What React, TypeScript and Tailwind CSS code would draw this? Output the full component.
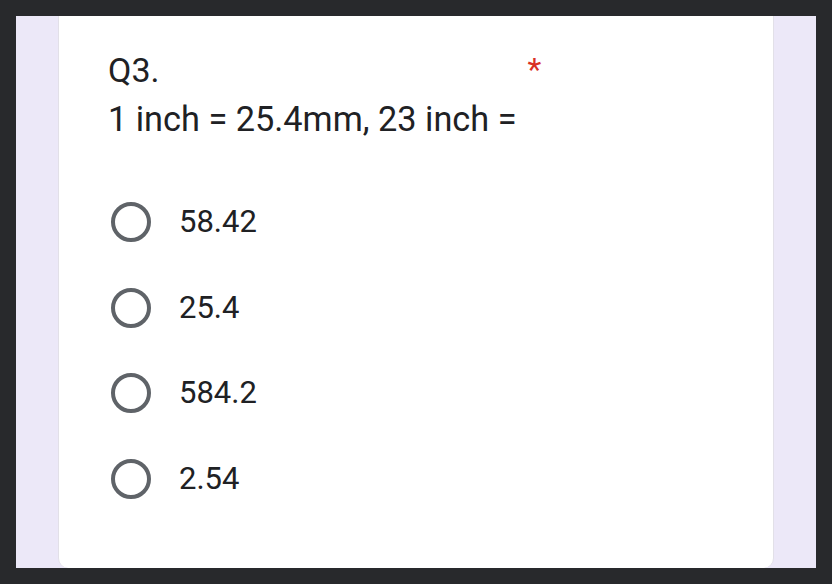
const options = ['58.42', '25.4', '584.2', '2.54'];

export default function App() {
  return (
    <div className="w-[832px] h-[584px] bg-[#28292c] pt-[16px] px-[16px] pb-[16px] font-['Roboto',sans-serif]">
      <div className="h-full bg-[#ece8f8] px-[42px]">
        <div className="h-full bg-white rounded-b-[10px] border-l border-r border-[#e2e0e8] pl-[49px] pr-6 pt-[34px]">
          <div className="flex">
            <div className="text-[#202124]">
              <div className="text-[34px] leading-[40px]">Q3.</div>
              <div className="text-[34.3px] leading-[40px] mt-[9px]">1 inch = 25.4mm, 23 inch =</div>
            </div>
            <span className="ml-[11px] mt-[2px] text-[#d93025] text-[32px] leading-[34px]">*</span>
          </div>
          <div className="mt-[63px] flex flex-col gap-[45.5px]">
            {options.map((o) => (
              <div key={o} className="flex items-center h-[40px]">
                <div className="ml-[3px] w-[40px] h-[40px] rounded-full border-[4px] border-[#5f6368]" />
                <span className="ml-[28px] text-[31px] leading-[40px] text-[#202124]">{o}</span>
              </div>
            ))}
          </div>
        </div>
      </div>
    </div>
  );
}
